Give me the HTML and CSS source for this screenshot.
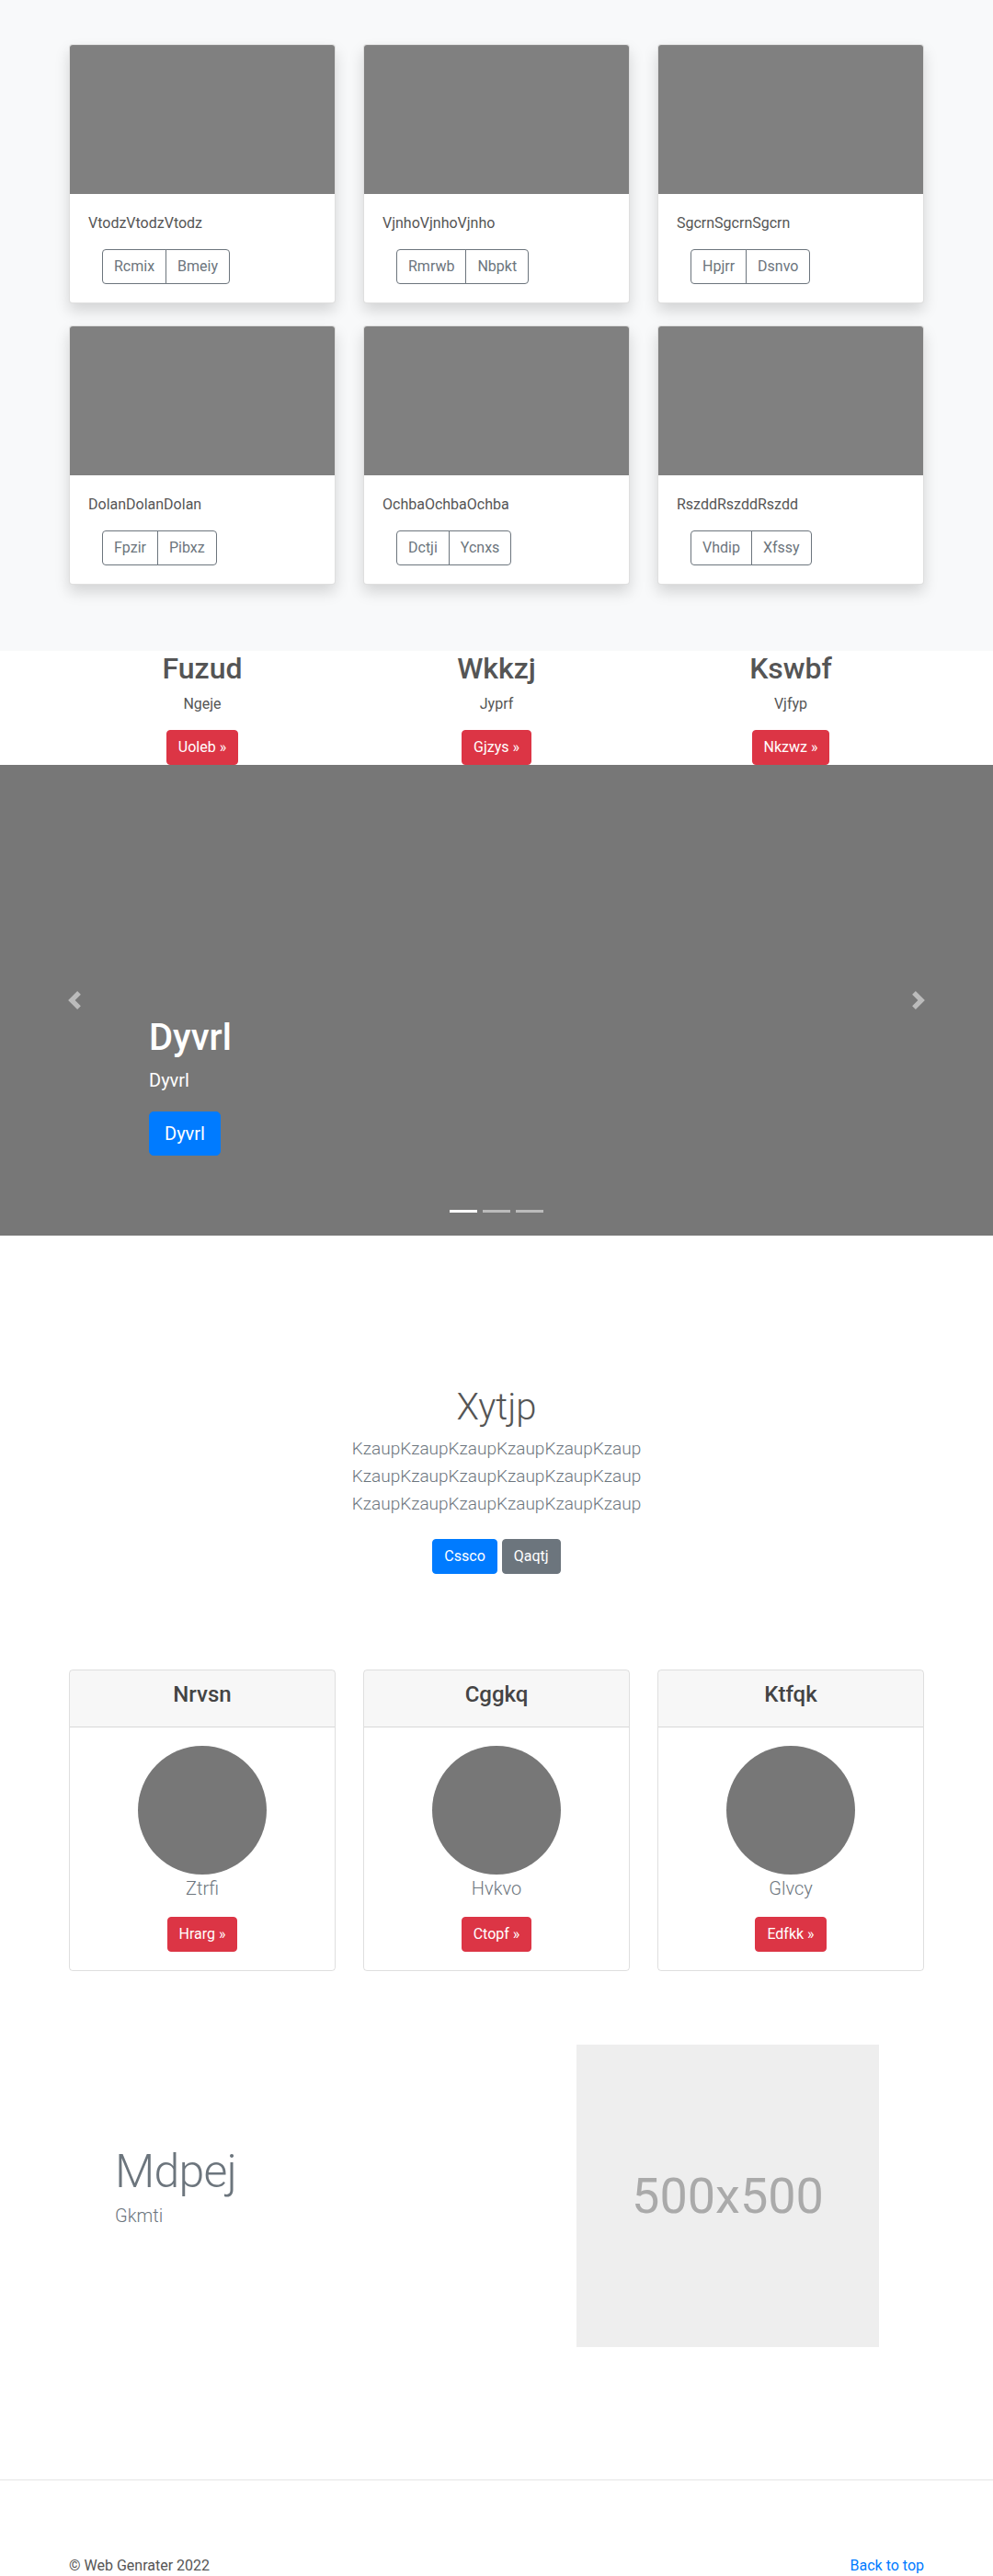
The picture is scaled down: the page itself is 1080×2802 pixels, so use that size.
FILE: index.html
```html
<!DOCTYPE html>
<html lang="en">
<head>
<meta charset="utf-8">
<title>Album</title>
<link rel="stylesheet" href="styles.css">
</head>
<body>
<section class="album">
  <div class="container grid3 album-grid">
    <div class="card shadow">
      <div class="card-img"></div>
      <div class="card-body">
        <p class="card-text">VtodzVtodzVtodz</p>
        <div class="btn-group"><a class="btn btn-outline">Rcmix</a><a class="btn btn-outline">Bmeiy</a></div>
      </div>
    </div>
    <div class="card shadow">
      <div class="card-img"></div>
      <div class="card-body">
        <p class="card-text">VjnhoVjnhoVjnho</p>
        <div class="btn-group"><a class="btn btn-outline">Rmrwb</a><a class="btn btn-outline">Nbpkt</a></div>
      </div>
    </div>
    <div class="card shadow">
      <div class="card-img"></div>
      <div class="card-body">
        <p class="card-text">SgcrnSgcrnSgcrn</p>
        <div class="btn-group"><a class="btn btn-outline">Hpjrr</a><a class="btn btn-outline">Dsnvo</a></div>
      </div>
    </div>
    <div class="card shadow">
      <div class="card-img"></div>
      <div class="card-body">
        <p class="card-text">DolanDolanDolan</p>
        <div class="btn-group"><a class="btn btn-outline">Fpzir</a><a class="btn btn-outline">Pibxz</a></div>
      </div>
    </div>
    <div class="card shadow">
      <div class="card-img"></div>
      <div class="card-body">
        <p class="card-text">OchbaOchbaOchba</p>
        <div class="btn-group"><a class="btn btn-outline">Dctji</a><a class="btn btn-outline">Ycnxs</a></div>
      </div>
    </div>
    <div class="card shadow">
      <div class="card-img"></div>
      <div class="card-body">
        <p class="card-text">RszddRszddRszdd</p>
        <div class="btn-group"><a class="btn btn-outline">Vhdip</a><a class="btn btn-outline">Xfssy</a></div>
      </div>
    </div>
  </div>
</section>

<section class="marketing">
  <div class="container grid3">
    <div class="mk-col">
      <h2>Fuzud</h2>
      <p>Ngeje</p>
      <a class="btn btn-danger">Uoleb &raquo;</a>
    </div>
    <div class="mk-col">
      <h2>Wkkzj</h2>
      <p>Jyprf</p>
      <a class="btn btn-danger">Gjzys &raquo;</a>
    </div>
    <div class="mk-col">
      <h2>Kswbf</h2>
      <p>Vjfyp</p>
      <a class="btn btn-danger">Nkzwz &raquo;</a>
    </div>
  </div>
</section>

<section class="carousel">
  <a class="carousel-control prev">
    <svg width="20" height="20" viewBox="0 0 8 8"><path fill="#fff" d="M5.25 0l-4 4 4 4 1.5-1.5L4.25 4l2.5-2.5L5.25 0z"/></svg>
  </a>
  <div class="carousel-caption">
    <h1>Dyvrl</h1>
    <p>Dyvrl</p>
    <a class="btn btn-lg btn-primary">Dyvrl</a>
  </div>
  <a class="carousel-control next">
    <svg width="20" height="20" viewBox="0 0 8 8"><path fill="#fff" d="M2.75 0l-1.5 1.5L3.75 4l-2.5 2.5L2.75 8l4-4-4-4z"/></svg>
  </a>
  <ol class="carousel-indicators">
    <li class="active"></li>
    <li></li>
    <li></li>
  </ol>
</section>

<section class="jumbotron">
  <h1 class="jumbo-heading">Xytjp</h1>
  <p class="lead muted">KzaupKzaupKzaupKzaupKzaupKzaup<br>KzaupKzaupKzaupKzaupKzaupKzaup<br>KzaupKzaupKzaupKzaupKzaupKzaup</p>
  <div class="jumbo-actions">
    <a class="btn btn-primary">Cssco</a>
    <a class="btn btn-secondary">Qaqtj</a>
  </div>
</section>

<section class="features">
  <div class="container grid3">
    <div class="fcard">
      <div class="fcard-header"><h4>Nrvsn</h4></div>
      <div class="fcard-body">
        <div class="circle"></div>
        <p class="lead muted">Ztrfi</p>
        <a class="btn btn-danger">Hrarg &raquo;</a>
      </div>
    </div>
    <div class="fcard">
      <div class="fcard-header"><h4>Cggkq</h4></div>
      <div class="fcard-body">
        <div class="circle"></div>
        <p class="lead muted">Hvkvo</p>
        <a class="btn btn-danger">Ctopf &raquo;</a>
      </div>
    </div>
    <div class="fcard">
      <div class="fcard-header"><h4>Ktfqk</h4></div>
      <div class="fcard-body">
        <div class="circle"></div>
        <p class="lead muted">Glvcy</p>
        <a class="btn btn-danger">Edfkk &raquo;</a>
      </div>
    </div>
  </div>
</section>

<section class="featurette container">
  <div class="featurette-text">
    <h2 class="featurette-heading">Mdpej</h2>
    <p class="lead muted">Gkmti</p>
  </div>
  <div class="placeholder">500x500</div>
</section>

<footer class="footer">
  <div class="container footer-inner">
    <p>&copy; Web Genrater 2022</p>
    <a class="back-top">Back to top</a>
  </div>
</footer>
</body>
</html>
```

FILE: styles.css
```css
* { box-sizing: border-box; }

body {
  margin: 0;
  font-family: Roboto, "Liberation Sans", Arial, sans-serif;
  font-size: 16px;
  line-height: 1.5;
  color: #555;
  background: #fff;
}

p { margin: 0 0 16px; }
h1, h2, h4 { margin: 0 0 8px; font-weight: 500; line-height: 1.2; }

.container {
  width: 960px;
  margin: 0 auto;
  padding: 0 15px;
}

.grid3 {
  display: grid;
  grid-template-columns: repeat(3, 1fr);
  column-gap: 30px;
}

/* Buttons */
.btn {
  display: inline-block;
  padding: 6px 12px;
  font-size: 16px;
  line-height: 1.5;
  border: 1px solid transparent;
  border-radius: 4px;
  text-align: center;
  text-decoration: none;
  cursor: pointer;
}
.btn-lg { padding: 8px 16px; font-size: 20px; line-height: 1.5; border-radius: 5px; }
.btn-primary { background: #007bff; border-color: #007bff; color: #fff; }
.btn-secondary { background: #6c757d; border-color: #6c757d; color: #fff; }
.btn-danger { background: #dc3545; border-color: #dc3545; color: #fff; }
.btn-outline { color: #6c757d; border-color: #6c757d; background: transparent; }

.btn-group { display: inline-flex; margin-left: 15px; }
.btn-group .btn { border-radius: 0; }
.btn-group .btn + .btn { margin-left: -1px; }
.btn-group .btn:first-child { border-radius: 4px 0 0 4px; }
.btn-group .btn:last-child { border-radius: 0 4px 4px 0; }

/* Album */
.album {
  background: #f8f9fa;
  padding: 48px 0 72px;
}
.album-grid { row-gap: 24px; }

.card {
  background: #fff;
  border: 1px solid rgba(0,0,0,.125);
  border-radius: 4px;
  overflow: hidden;
}
.shadow { box-shadow: 0 8px 16px rgba(0,0,0,.15); }
.card-img {
  height: 162px;
  background: #808080;
}
.card-body { padding: 20px; }
.card-text { margin-bottom: 16px; }

/* Marketing */
.marketing { padding: 0; }
.mk-col { text-align: center; }
.mk-col h2 { font-size: 32px; margin-bottom: 8px; color: #555; }
.mk-col p { margin-bottom: 16px; }

/* Carousel */
.carousel {
  position: relative;
  height: 512px;
  background: #777;
}
.carousel-control {
  position: absolute;
  top: 0;
  bottom: 0;
  width: 15%;
  display: flex;
  align-items: center;
  justify-content: center;
  opacity: .5;
}
.carousel-control.prev { left: 0; }
.carousel-control.next { right: 0; }
.carousel-caption {
  position: absolute;
  left: 15%;
  right: 15%;
  bottom: 48px;
  padding: 20px 0;
  color: #fff;
  display: flex;
  flex-direction: column;
  align-items: flex-start;
}
.carousel-caption h1 { font-size: 40px; margin-bottom: 8px; }
.carousel-caption p { font-size: 20px; line-height: 1.4; margin-bottom: 20px; }
.carousel-caption .btn { margin-bottom: 19px; }
.carousel-indicators {
  position: absolute;
  left: 0;
  right: 0;
  bottom: 25px;
  margin: 0;
  padding: 0;
  list-style: none;
  display: flex;
  justify-content: center;
}
.carousel-indicators li {
  width: 30px;
  height: 3px;
  margin: 0 3px;
  background: rgba(255,255,255,.5);
}
.carousel-indicators li.active { background: #fff; }

/* Jumbotron */
.jumbotron {
  text-align: center;
  padding: 163px 0 0;
}
.jumbo-heading {
  font-size: 40px;
  font-weight: 300;
  margin-bottom: 6px;
  color: #555;
}
.lead { font-size: 20px; font-weight: 300; line-height: 1.5; }
.muted { color: #6c757d; }
.jumbotron .lead { margin-bottom: 23px; font-size: 19px; line-height: 30px; }
.jumbo-actions {
  display: flex;
  justify-content: center;
  gap: 5px;
}

/* Feature cards */
.features { padding-top: 104px; }
.fcard {
  border: 1px solid rgba(0,0,0,.125);
  border-radius: 4px;
  text-align: center;
  overflow: hidden;
}
.fcard-header {
  background: rgba(0,0,0,.03);
  border-bottom: 1px solid rgba(0,0,0,.125);
  padding: 12px 20px;
}
.fcard-header h4 { font-size: 24px; margin-bottom: 8px; color: #444; }
.fcard-body {
  padding: 20px;
  display: flex;
  flex-direction: column;
  align-items: center;
}
.circle {
  width: 140px;
  height: 140px;
  border-radius: 50%;
  background: #777;
}
.fcard-body .lead { margin-bottom: 16px; }

/* Featurette */
.featurette {
  display: grid;
  grid-template-columns: 1fr 329px;
  align-items: center;
  padding: 0 64px 0 65px;
  margin-top: 80px;
  margin-bottom: 144px;
}
.featurette-heading {
  font-size: 50px;
  font-weight: 300;
  line-height: 1;
  letter-spacing: -0.8px;
  color: #6c757d;
  margin-bottom: 8px;
}
.featurette-text .lead { margin-bottom: 16px; }
.placeholder {
  width: 329px;
  height: 329px;
  background: #eee;
  color: #aaa;
  font-size: 54px;
  display: flex;
  align-items: center;
  justify-content: center;
}

/* Footer */
.footer {
  border-top: 1px solid #e5e5e5;
  padding: 81px 0 48px;
}
.footer-inner {
  display: flex;
  justify-content: space-between;
}
.footer-inner p { margin: 0; color: #555; }
.back-top { color: #007bff; text-decoration: none; }
```
